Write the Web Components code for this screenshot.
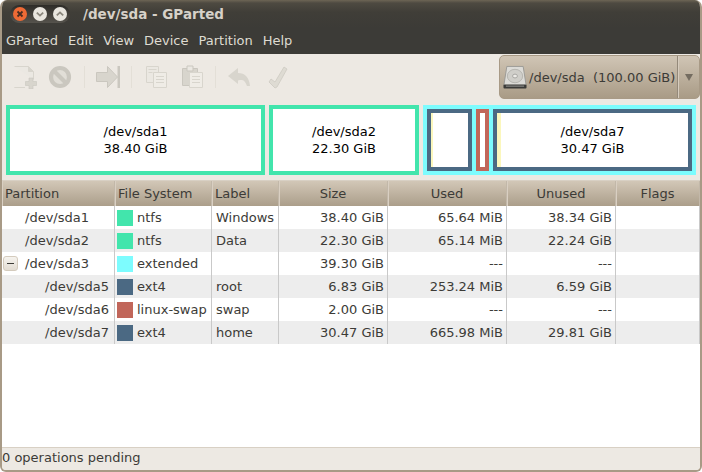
<!DOCTYPE html>
<html>
<head>
<meta charset="utf-8">
<title>/dev/sda - GParted</title>
<style>
    html, body { margin: 0; padding: 0; background: #fff; }
    body { font: 13px "DejaVu Sans", sans-serif; }
</style>
</head>
<body>
<gp-window>
    <gp-titlebar slot="top">/dev/sda - GParted</gp-titlebar>
    <gp-menubar slot="top"></gp-menubar>
    <gp-toolbar slot="top"></gp-toolbar>
    <gp-diskmap slot="top"></gp-diskmap>
    <gp-table></gp-table>
    <gp-statusbar slot="bottom">0 operations pending</gp-statusbar>
</gp-window>

<script>
const COLS = '113px 97px 67px 109px 119px 109px 84px';
const FS = { ntfs: '#42e5ac', extended: '#7dfcfe', ext4: '#4b6983', swap: '#c1665a' };

class GpWindow extends HTMLElement {
    constructor() {
        super();
        this.attachShadow({ mode: 'open' });
        this.shadowRoot.innerHTML = `
            <style>
                :host {
                    display: flex;
                    flex-direction: column;
                    width: 702px;
                    height: 472px;
                    box-sizing: border-box;
                    background: #ede9e3;
                    border-radius: 7px 7px 6px 6px;
                    overflow: hidden;
                    border: solid #a89a86;
                    border-width: 0 2px 2px 2px;
                    color: #3c3b37;
                }
                .main { flex: 1; min-height: 0; background: #fff; border-top: 1px solid #d8d0c4; display: flex; }
            </style>
            <slot name="top"></slot>
            <div class="main"><slot></slot></div>
            <slot name="bottom"></slot>
        `;
    }
}

class GpTitlebar extends HTMLElement {
    constructor() {
        super();
        this.attachShadow({ mode: 'open' });
        this.shadowRoot.innerHTML = `
            <style>
                :host {
                    display: flex;
                    align-items: center;
                    height: 28px;
                    margin: 0 -2px;
                    padding: 0 0 0 10px;
                    background: linear-gradient(#6d6555 0, #4e4a41 3px, #403e38 12px, #3c3b37 100%);
                }
                .btns {
                    display: flex;
                    gap: 6px;
                    align-items: center;
                    height: 18px;
                    padding: 0 3px;
                    margin-right: 13px;
                    border-radius: 9px;
                    background: linear-gradient(#2e2c28, #56534d);
                }
                .title { color: #d6d1c8; font-weight: bold; font-size: 13.5px; }
                svg { display: block; }
            </style>
            <div class="btns">
                <svg width="14" height="14" viewBox="0 0 14 14">
                    <circle cx="7" cy="7" r="7" fill="#ef6a35"/>
                    <path d="M4.5 4.5l5 5M9.5 4.5l-5 5" stroke="#4a2c20" stroke-width="1.8"/>
                </svg>
                <svg width="14" height="14" viewBox="0 0 14 14">
                    <circle cx="7" cy="7" r="7" fill="#e9e6df"/>
                    <path d="M3.8 5.6L7 8.6l3.2-3" fill="none" stroke="#8a867c" stroke-width="1.8"/>
                </svg>
                <svg width="14" height="14" viewBox="0 0 14 14">
                    <circle cx="7" cy="7" r="7" fill="#e9e6df"/>
                    <path d="M3.8 8.4L7 5.4l3.2 3" fill="none" stroke="#8a867c" stroke-width="1.8"/>
                </svg>
            </div>
            <span class="title"><slot></slot></span>
        `;
    }
}

class GpMenubar extends HTMLElement {
    constructor() {
        super();
        this.attachShadow({ mode: 'open' });
        const items = ['GParted', 'Edit', 'View', 'Device', 'Partition', 'Help'];
        this.shadowRoot.innerHTML = `
            <style>
                :host {
                    display: flex;
                    align-items: center;
                    gap: 10px;
                    height: 24px;
                    margin: 0 -2px;
                    padding: 0 0 2px 6px;
                    background: #3c3b37;
                    color: #dfdbd2;
                }
            </style>
            ${items.map(i => `<span>${i}</span>`).join('')}
        `;
    }
}

class GpToolbar extends HTMLElement {
    constructor() {
        super();
        this.attachShadow({ mode: 'open' });
        const g = '#d8d5cd', d = '#cac7bf', l = '#ebe8e2';
        this.shadowRoot.innerHTML = `
            <style>
                :host {
                    display: flex;
                    align-items: center;
                    height: 46px;
                    padding: 0 0 0 11px;
                    background: #ede9e3;
                }
                svg { display: block; flex: none; }
                .ico { filter: blur(0.35px); }
                .sep { width: 1px; height: 22px; background: #e3dfd7; flex: none; }
                .push { flex: 1; }
            </style>
            <svg class="ico" width="24" height="24" viewBox="0 0 24 24" style="margin-right:11px">
                <path d="M1.5 1.5h14l5 5v8M12 22.5H1.5z" fill="${l}" stroke="${g}"/>
                <path d="M15.5 1.5v5h5" fill="${g}" stroke="${g}"/>
                <path d="M16 13h4v3.5h3.5v4H20V24h-4v-3.5h-3.5v-4H16z" fill="${g}" stroke="${d}" stroke-width=".6"/>
            </svg>
            <svg class="ico" width="24" height="24" viewBox="0 0 24 24" style="margin-right:12px">
                <circle cx="12" cy="12" r="9" fill="#e1ded7" stroke="${d}" stroke-width="4.2"/>
                <path d="M6 6l12 12" stroke="${d}" stroke-width="4.2"/>
            </svg>
            <div class="sep" style="margin-right:11px"></div>
            <svg class="ico" width="25" height="24" viewBox="0 0 25 24" style="margin-right:10px">
                <path d="M0.5 7.5h11V1.5l10 10.5-10 10.5v-6h-11z" fill="${g}" stroke="${d}"/>
                <path d="M21.5 1v22h2.5V1z" fill="${d}"/>
            </svg>
            <div class="sep" style="margin-right:14px"></div>
            <svg class="ico" width="21" height="24" viewBox="0 0 21 24" style="margin-right:15px">
                <path d="M0.5 1.5h12v16h-12z" fill="${l}" stroke="${g}"/>
                <path d="M7.5 7.5h13v15h-13z" fill="#efece6" stroke="${g}"/>
                <path d="M2.5 4.5h8M2.5 7.5h4M10 11.5h8M10 14.5h8M10 17.5h8" stroke="${g}"/>
            </svg>
            <svg class="ico" width="21" height="24" viewBox="0 0 21 24" style="margin-right:12px">
                <path d="M0.5 3.5h15v17h-15z" fill="${g}" stroke="${d}"/>
                <path d="M5 1h6v5H5z" fill="${l}" stroke="${d}"/>
                <path d="M7.5 7.5h13v15h-13z" fill="#efece6" stroke="${g}"/>
                <path d="M10 11.5h8M10 14.5h8M10 17.5h8" stroke="${g}"/>
            </svg>
            <div class="sep" style="margin-right:11px"></div>
            <svg class="ico" width="24" height="24" viewBox="0 0 24 24" style="margin-right:17px">
                <path d="M1 11L11 3v5c7 0 11 4 12 13h-3c-1-3-3-6-5-6-1 0-3 0-4 .5V19z" fill="${g}"/>
            </svg>
            <svg class="ico" width="22" height="24" viewBox="0 0 22 24">
                <path d="M3 14l4 3L16 2l3 2-10 18-2 1L1 17z" fill="#dedbd3" stroke="${d}" stroke-width=".7"/>
            </svg>
            <div class="push"></div>
            <gp-combo></gp-combo>
        `;
    }
}

class GpCombo extends HTMLElement {
    constructor() {
        super();
        this.attachShadow({ mode: 'open' });
        this.shadowRoot.innerHTML = `
            <style>
                :host {
                    display: flex;
                    align-items: stretch;
                    width: 201px;
                    height: 44px;
                    box-sizing: border-box;
                    border: 1px solid #a89a86;
                    border-radius: 5px;
                    background: linear-gradient(#d0c5b5, #a99b86);
                    color: #3c3b37;
                }
                .label { flex: 1; display: flex; align-items: center; padding-left: 3px; gap: 2px; white-space: pre; }
                .arrow {
                    width: 21px;
                    border-left: 1px solid #94897a;
                    box-shadow: inset 1px 0 0 #d6ccbe;
                    display: flex;
                    align-items: center;
                    justify-content: center;
                }
                svg { display: block; }
            </style>
            <div class="label">
                <svg width="24" height="24" viewBox="0 0 25 25">
                    <path d="M4 1.5h17l3 19H1z" fill="#dcdbd7" stroke="#9b9a95"/>
                    <ellipse cx="12.5" cy="11.5" rx="8" ry="7" fill="#cfcec9" stroke="#b5b4af"/>
                    <ellipse cx="12.5" cy="11.5" rx="2.5" ry="2" fill="#ecebe7" stroke="#a5a4a0"/>
                    <path d="M0.5 20.5h24v3q0 1-1 1h-22q-1 0-1-1z" fill="#3a3a38"/>
                    <path d="M3 22h19" stroke="#9a9a96"/>
                </svg>
                <span>/dev/sda  (100.00 GiB)</span>
            </div>
            <div class="arrow">
                <svg width="8" height="7" viewBox="0 0 8 7"><path d="M0 0h8L4 7z" fill="#746c60"/></svg>
            </div>
        `;
    }
}

class GpPart extends HTMLElement {
    constructor() {
        super();
        this.attachShadow({ mode: 'open' });
    }

    connectedCallback() {
        const used = this.getAttribute('used') || 0;
        this.shadowRoot.innerHTML = `
            <style>
                :host {
                    display: flex;
                    box-sizing: border-box;
                    border: 4px solid ${this.getAttribute('color')};
                    background: #fff;
                    color: #000;
                    text-align: center;
                    line-height: 17px;
                    min-width: 0;
                }
                .used { width: ${used}px; background: #fbf7bd; flex: none; }
                .text { flex: 1; align-self: center; margin-left: -${used}px; }
            </style>
            <div class="used"></div>
            <div class="text"><slot></slot></div>
        `;
    }
}

class GpDiskmap extends HTMLElement {
    constructor() {
        super();
        this.attachShadow({ mode: 'open' });
        this.shadowRoot.innerHTML = `
            <style>
                :host {
                    display: grid;
                    grid-template-columns: 259px 150px 273px;
                    gap: 4px;
                    height: 70px;
                    padding: 5px 4px;
                    background: #ede9e3;
                }
                .ext {
                    display: grid;
                    grid-template-columns: 45px 13px 199px;
                    gap: 4px;
                    padding: 4px;
                    background: ${FS.extended};
                    box-sizing: border-box;
                }
            </style>
            <gp-part color="${FS.ntfs}">/dev/sda1<br>38.40 GiB</gp-part>
            <gp-part color="${FS.ntfs}">/dev/sda2<br>22.30 GiB</gp-part>
            <div class="ext">
                <gp-part color="${FS.ext4}" used="2"></gp-part>
                <gp-part color="${FS.swap}"></gp-part>
                <gp-part color="${FS.ext4}" used="4">/dev/sda7<br>30.47 GiB</gp-part>
            </div>
        `;
    }
}

class GpTable extends HTMLElement {
    constructor() {
        super();
        this.attachShadow({ mode: 'open' });
        const heads = [['Partition', 'l'], ['File System', 'l'], ['Label', 'l'], ['Size', 'c'], ['Used', 'c'], ['Unused', 'c'], ['Flags', 'c']];
        const rows = [
            [0, '/dev/sda1', 'ntfs', 'ntfs', 'Windows', '38.40 GiB', '65.64 MiB', '38.34 GiB'],
            [0, '/dev/sda2', 'ntfs', 'ntfs', 'Data', '22.30 GiB', '65.14 MiB', '22.24 GiB'],
            [2, '/dev/sda3', 'extended', 'extended', '', '39.30 GiB', '---', '---'],
            [1, '/dev/sda5', 'ext4', 'ext4', 'root', '6.83 GiB', '253.24 MiB', '6.59 GiB'],
            [1, '/dev/sda6', 'swap', 'linux-swap', 'swap', '2.00 GiB', '---', '---'],
            [1, '/dev/sda7', 'ext4', 'ext4', 'home', '30.47 GiB', '665.98 MiB', '29.81 GiB'],
        ];
        this.shadowRoot.innerHTML = `
            <style>
                :host { display: block; flex: 1; min-width: 0; background: #fff; }
                .head, .row { display: grid; grid-template-columns: ${COLS}; }
                .head {
                    height: 25px;
                    background: linear-gradient(#d2c7b7, #ab9e8a);
                    color: #3c3b37;
                }
                .head div {
                    display: flex;
                    align-items: center;
                    padding: 0 3px 0 3px;
                    border-right: 1px solid #c2b8a9;
                    box-shadow: inset 1px 0 0 #d9cfc2;
                    overflow: hidden;
                }
                .head .c { justify-content: center; }
                .row { height: 23px; line-height: 23px; color: #3c3b37; }
                .row:nth-child(even) { background: #ededed; }
                .row > div {
                    border-right: 1px solid #c9c9c9;
                    white-space: nowrap;
                    overflow: hidden;
                    box-sizing: border-box;
                }
                .name { display: flex; align-items: center; position: relative; }
                .exp {
                    position: absolute;
                    left: 1px;
                    top: 4px;
                    width: 15px;
                    height: 15px;
                    box-sizing: border-box;
                    border: 1px solid #d4cbbd;
                    border-radius: 3px;
                    background: linear-gradient(#f6f3ee, #e2dcd2);
                    display: flex;
                    align-items: center;
                    justify-content: center;
                }
                .exp i { display: block; width: 7px; height: 1px; background: #3c3b37; }
                .fs { display: flex; align-items: center; padding-left: 2px; gap: 4px; }
                .sw { width: 16px; height: 16px; flex: none; }
                .lb { padding-left: 4px; }
                .r { text-align: right; padding-right: 3px; }
            </style>
            <div class="head">
                ${heads.map(h => `<div class="${h[1]}">${h[0]}</div>`).join('')}
            </div>
            <div class="body">
                ${rows.map(r => `
                    <div class="row">
                        <div class="name" style="padding-left:${r[0] === 1 ? 43 : 23}px">
                            ${r[0] === 2 ? '<span class="exp"><i></i></span>' : ''}${r[1]}
                        </div>
                        <div class="fs"><span class="sw" style="background:${FS[r[2]]}"></span>${r[3]}</div>
                        <div class="lb">${r[4]}</div>
                        <div class="r">${r[5]}</div>
                        <div class="r">${r[6]}</div>
                        <div class="r">${r[7]}</div>
                        <div></div>
                    </div>
                `).join('')}
            </div>
        `;
    }
}

class GpStatusbar extends HTMLElement {
    constructor() {
        super();
        this.attachShadow({ mode: 'open' });
        this.shadowRoot.innerHTML = `
            <style>
                :host {
                    display: flex;
                    align-items: center;
                    height: 23px;
                    box-sizing: border-box;
                    padding-bottom: 3px;
                    border-top: 1px solid #d8d0c4;
                    background: #ede9e3;
                    color: #3c3b37;
                }
            </style>
            <slot></slot>
        `;
    }
}

customElements.define('gp-window', GpWindow);
customElements.define('gp-titlebar', GpTitlebar);
customElements.define('gp-menubar', GpMenubar);
customElements.define('gp-toolbar', GpToolbar);
customElements.define('gp-combo', GpCombo);
customElements.define('gp-part', GpPart);
customElements.define('gp-diskmap', GpDiskmap);
customElements.define('gp-table', GpTable);
customElements.define('gp-statusbar', GpStatusbar);
</script>
</body>
</html>
